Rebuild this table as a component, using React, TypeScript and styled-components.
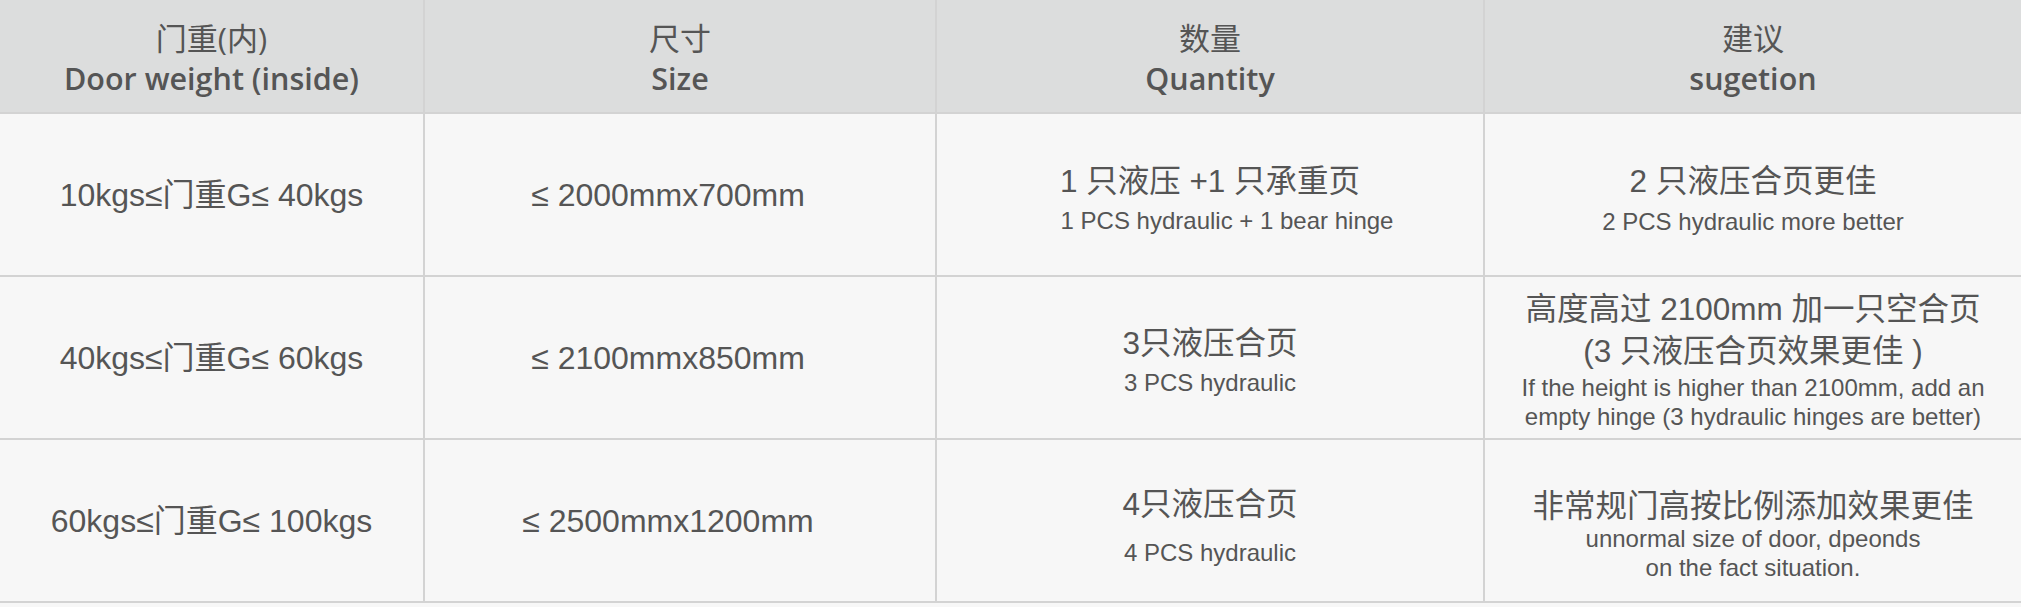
import React from "react";
import styled, { createGlobalStyle } from "styled-components";

const GlobalStyle = createGlobalStyle`
  html, body {
    margin: 0;
    padding: 0;
    background: #f7f7f7;
  }
  body {
    width: 2021px;
  }
`;

const Table = styled.div`
  display: grid;
  grid-template-columns: 423px 510px 546px 536px;
  grid-template-rows: 112px repeat(3, 161px);
  gap: 2px;
  padding-bottom: 2px;
  width: 2021px;
  background: #d3d3d3;
`;

const HeadCell = styled.div`
  display: flex;
  flex-direction: column;
  align-items: center;
  justify-content: center;
  box-sizing: border-box;
  padding-top: 4px;
  background: #dcdddd;
  color: #555555;
  font-family: "Open Sans", "Noto Sans CJK SC", sans-serif;
  font-size: 31px;
  line-height: 40px;
  text-align: center;
  white-space: nowrap;
`;

const HeadLine = styled.div<{ $latin?: boolean }>`
  font-weight: ${(p) => (p.$latin ? 600 : 400)};
  font-size: ${(p) => (p.$latin ? 30.5 : 31)}px;
`;

const Cell = styled.div<{ $padTop?: number; $padRight?: number }>`
  display: flex;
  flex-direction: column;
  align-items: center;
  justify-content: center;
  box-sizing: border-box;
  padding-top: ${(p) => p.$padTop ?? 0}px;
  padding-right: ${(p) => p.$padRight ?? 0}px;
  background: #f7f7f7;
  color: #555555;
  font-family: "Liberation Sans", "Noto Sans CJK SC", sans-serif;
  text-align: center;
  white-space: nowrap;
`;

const Value = styled.div`
  font-size: 32px;
  line-height: 40px;
`;

const Title = styled.div`
  font-size: 31.5px;
  line-height: 42px;
`;

const Note = styled.div<{ $gap?: number; $indent?: number }>`
  margin-top: ${(p) => p.$gap ?? 4}px;
  padding-left: ${(p) => p.$indent ?? 0}px;
  font-size: 24px;
  line-height: 29px;
`;

type Row = {
  weight: string;
  size: string;
  qty: { title: string; note: string; gap: number; indent?: number; padTop: number };
  tip: {
    title: React.ReactNode;
    note: React.ReactNode;
    gap: number;
    padTop: number;
  };
};

const headers: [string, string][] = [
  ["门重(内)", "Door weight (inside)"],
  ["尺寸", "Size"],
  ["数量", "Quantity"],
  ["建议", "sugetion"],
];

const rows: Row[] = [
  {
    weight: "10kgs≤门重G≤ 40kgs",
    size: "≤ 2000mmx700mm",
    qty: {
      title: "1 只液压 +1 只承重页",
      note: "1 PCS hydraulic + 1 bear hinge",
      gap: 4,
      indent: 34,
      padTop: 6,
    },
    tip: {
      title: "2 只液压合页更佳",
      note: "2 PCS hydraulic more better",
      gap: 5,
      padTop: 6,
    },
  },
  {
    weight: "40kgs≤门重G≤ 60kgs",
    size: "≤ 2100mmx850mm",
    qty: {
      title: "3只液压合页",
      note: "3 PCS hydraulic",
      gap: 4,
      padTop: 4,
    },
    tip: {
      title: (
        <>
          高度高过 2100mm 加一只空合页
          <br />
          (3 只液压合页效果更佳 )
        </>
      ),
      note: (
        <>
          If the height is higher than 2100mm, add an
          <br />
          empty hinge (3 hydraulic hinges are better)
        </>
      ),
      gap: 1,
      padTop: 4,
    },
  },
  {
    weight: "60kgs≤门重G≤ 100kgs",
    size: "≤ 2500mmx1200mm",
    qty: {
      title: "4只液压合页",
      note: "4 PCS hydraulic",
      gap: 13,
      padTop: 9,
    },
    tip: {
      title: "非常规门高按比例添加效果更佳",
      note: (
        <>
          unnormal size of door, dpeonds
          <br />
          on the fact situation.
        </>
      ),
      gap: -3,
      padTop: 26,
    },
  },
];

export default function App() {
  return (
    <>
      <GlobalStyle />
      <Table>
        {headers.map(([zh, en]) => (
          <HeadCell key={en}>
            <HeadLine>{zh}</HeadLine>
            <HeadLine $latin>{en}</HeadLine>
          </HeadCell>
        ))}
        {rows.map((r) => (
          <React.Fragment key={r.weight}>
            <Cell>
              <Value>{r.weight}</Value>
            </Cell>
            <Cell $padRight={24}>
              <Value>{r.size}</Value>
            </Cell>
            <Cell $padTop={r.qty.padTop}>
              <Title>{r.qty.title}</Title>
              <Note $gap={r.qty.gap} $indent={r.qty.indent}>
                {r.qty.note}
              </Note>
            </Cell>
            <Cell $padTop={r.tip.padTop}>
              <Title>{r.tip.title}</Title>
              <Note $gap={r.tip.gap}>{r.tip.note}</Note>
            </Cell>
          </React.Fragment>
        ))}
      </Table>
    </>
  );
}
